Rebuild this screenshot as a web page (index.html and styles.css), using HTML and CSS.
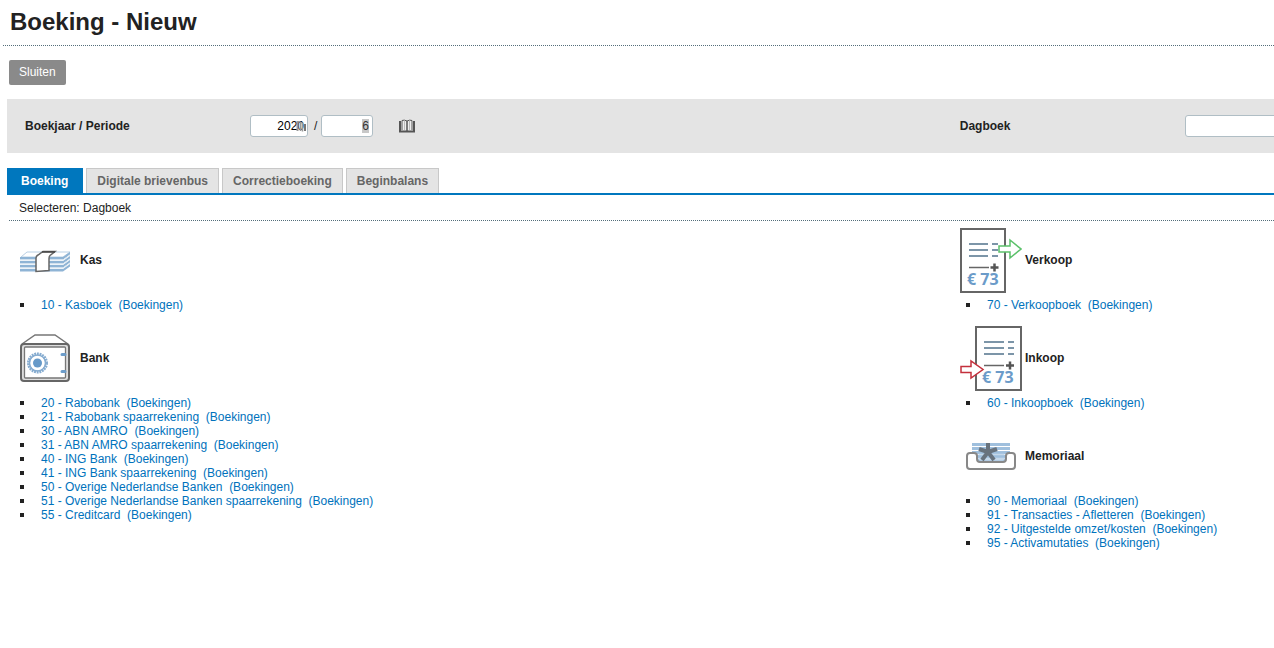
FILE: index.html
```html
<!DOCTYPE html>
<html lang="nl">
<head>
    <meta charset="UTF-8">
    <title>Boeking - Nieuw</title>
    <link rel="stylesheet" href="styles.css">
</head>
<body>
<h1 class="page-title">Boeking - Nieuw</h1>

<div class="toolbar">
    <button type="button" class="btn">Sluiten</button>
</div>

<form class="filter">
    <div class="filter-field">
        <label class="filter-label" for="year">Boekjaar / Periode</label>
        <span class="year-box">
            <input type="text" id="year" class="input input-year" value="2020">
            <svg class="year-icon" width="10" height="12" viewBox="0 0 10 12" fill="none" stroke="#999">
                <path d="M1.500 1v10" stroke-width="2" />
                <path d="M4.500 2v9M6.500 2.500v9" stroke-width="1.500" />
                <path d="M9 4v7" stroke="#777" stroke-width="2" />
                <path d="M1 1.500h3l3 2.500" />
            </svg>
        </span>
        <label class="slash" for="period">/</label>
        <input type="text" id="period" class="input input-period" value="6">
        <button type="button" class="book-btn" aria-label="Periode">
            <svg width="16" height="14" viewBox="0 0 16 14">
                <path d="M2 1.500Q4.500 0 8 2Q11.500 0 14 1.500V11H2z" fill="#eee" />
                <path d="M3 11V1.500Q5 .5 8 2Q11 .5 13 1.500V11" fill="none" stroke="#555" />
                <path d="M8 2v11" stroke="#555" stroke-width="1.500" />
                <path d="M5.500 1.500V11M10.500 1.500V11" stroke="#bbb" />
                <path d="M1 2v11M15 2v11" stroke="#555" stroke-width="2" />
                <path d="M0 12.500h16" stroke="#555" stroke-width="2" />
            </svg>
        </button>
    </div>
    <div class="filter-field">
        <label class="filter-label" for="journal">Dagboek</label>
        <input type="text" id="journal" class="input input-journal">
    </div>
</form>

<nav class="tabs">
    <a href="#" class="tab active">Boeking</a>
    <a href="#" class="tab">Digitale brievenbus</a>
    <a href="#" class="tab">Correctieboeking</a>
    <a href="#" class="tab">Beginbalans</a>
</nav>

<p class="subtitle">Selecteren: Dagboek</p>

<main class="columns">
    <div class="column">
        <section class="group">
            <h2 class="group-title">
                <svg class="group-icon" width="50" height="66" viewBox="0 0 50 66">
                    <path d="M7 25h43l-7 5H1z" fill="#fff" stroke="#b9d0e4" />
                    <path d="M0 30h43l7-5v2.500l-7 5H0zM0 34h43l7-5v2.500l-7 5H0zM0 38h43l7-5v2.500l-7 5H0zM0 42h43l7-5v2.500l-7 5H0z" fill="#8fb4d5" />
                    <path d="M0 33h43l7-5M0 37h43l7-5M0 41h43l7-5" fill="none" stroke="#dce8f2" />
                    <path d="M16 44.500V31q0-2 2-3l5-3.500h12l-5 4q-1 1-1 3v12z" fill="#fff" stroke="#666" stroke-width="1.500" />
                    <path d="M22 25h13" stroke="#444" stroke-width="1.500" />
                </svg>
                Kas
            </h2>
            <ul class="list">
                <li><a href="#">10 - Kasboek</a>&nbsp; <a href="#">(Boekingen)</a></li>
            </ul>
        </section>
        <section class="group">
            <h2 class="group-title">
                <svg class="group-icon" width="50" height="66" viewBox="0 0 50 66" fill="none">
                    <path d="M2 19L15 10h20l13 9" stroke="#777" stroke-width="1.500" />
                    <rect x="1" y="19" width="48" height="37" rx="3" fill="#ddd" stroke="#666" stroke-width="2" />
                    <rect x="4.500" y="22" width="41" height="31" rx="1" fill="#fff" stroke="#777" stroke-width="1.300" />
                    <circle cx="17.500" cy="38" r="9" stroke="#86acd0" stroke-width="3" stroke-dasharray="1.800 .8" />
                    <circle cx="17.500" cy="38" r="8" stroke="#86acd0" stroke-width="1.500" />
                    <circle cx="17.500" cy="38" r="4.500" fill="#6699c8" />
                    <path d="M42 29.500h3M42 46.500h3" stroke="#6d9dca" stroke-width="3" stroke-linecap="round" />
                </svg>
                Bank
            </h2>
            <ul class="list">
                <li><a href="#">20 - Rabobank</a>&nbsp; <a href="#">(Boekingen)</a></li>
                <li><a href="#">21 - Rabobank spaarrekening</a>&nbsp; <a href="#">(Boekingen)</a></li>
                <li><a href="#">30 - ABN AMRO</a>&nbsp; <a href="#">(Boekingen)</a></li>
                <li><a href="#">31 - ABN AMRO spaarrekening</a>&nbsp; <a href="#">(Boekingen)</a></li>
                <li><a href="#">40 - ING Bank</a>&nbsp; <a href="#">(Boekingen)</a></li>
                <li><a href="#">41 - ING Bank spaarrekening</a>&nbsp; <a href="#">(Boekingen)</a></li>
                <li><a href="#">50 - Overige Nederlandse Banken</a>&nbsp; <a href="#">(Boekingen)</a></li>
                <li><a href="#">51 - Overige Nederlandse Banken spaarrekening</a>&nbsp; <a href="#">(Boekingen)</a></li>
                <li><a href="#">55 - Creditcard</a>&nbsp; <a href="#">(Boekingen)</a></li>
            </ul>
        </section>
    </div>
    <div class="column column-right">
        <section class="group">
            <h2 class="group-title">
                <svg class="group-icon" width="62" height="66" viewBox="0 0 62 66">
                    <rect x="1" y="2" width="44" height="63" fill="#fff" stroke="#666" stroke-width="2" />
                    <path d="M9 17h19M9 23h19M9 29h19M32 17h6M32 23h6M32 29h6" stroke="#7c95a8" stroke-width="2" />
                    <path d="M9 40.500h20" stroke="#666" stroke-width="1.500" />
                    <path d="M30.500 40.500h8M34.500 36.500v8" stroke="#555" stroke-width="2.500" />
                    <text x="7" y="58" class="icon-text">€ 73</text>
                    <path d="M39 19h11v-6l11 9-11 9v-6H39z" fill="#fff" stroke="#5cc16b" stroke-width="1.500" />
                </svg>
                Verkoop
            </h2>
            <ul class="list">
                <li><a href="#">70 - Verkoopboek</a>&nbsp; <a href="#">(Boekingen)</a></li>
            </ul>
        </section>
        <section class="group">
            <h2 class="group-title">
                <svg class="group-icon" width="62" height="66" viewBox="0 0 62 66">
                    <rect x="16" y="2" width="45" height="63" fill="#fff" stroke="#666" stroke-width="2" />
                    <path d="M24 17h20M24 23h20M24 29h20M48 17h6M48 23h6M48 29h6" stroke="#7c95a8" stroke-width="2" />
                    <path d="M24 40.500h20" stroke="#666" stroke-width="1.500" />
                    <path d="M46 40.500h8M50 36.500v8" stroke="#555" stroke-width="2.500" />
                    <text x="22" y="58" class="icon-text">€ 73</text>
                    <path d="M1 41.500h10v-5.500l12 8.500-12 8.500v-5.500H1z" fill="#fff" stroke="#c4303c" stroke-width="1.500" />
                </svg>
                Inkoop
            </h2>
            <ul class="list">
                <li><a href="#">60 - Inkoopboek</a>&nbsp; <a href="#">(Boekingen)</a></li>
            </ul>
        </section>
        <section class="group">
            <h2 class="group-title">
                <svg class="group-icon" width="62" height="66" viewBox="0 0 62 66">
                    <path d="M12 21.500h38M12 25.500h38M12 29.500h38M14 33.500h34M16 37h30" stroke="#9fbfdd" stroke-width="3" />
                    <path d="M7 33q0-3 3-3h4q3 0 3 3v3q0 3 3 3h23q3 0 3-3v-3q0-3 3-3h3q3 0 3 3v10q0 3-3 3H10q-3 0-3-3z" fill="#fff" stroke="#888" stroke-width="2" />
                    <path d="M18.500 28.500h26v7q0 2-2 2h-22q-2 0-2-2z" fill="#c5d8ea" />
                    <path d="M18 29.500h27M18 33.500h27" stroke="#9fbfdd" stroke-width="2.500" />
                    <path d="M28 20v9M28 29l-9-3M28 29l9-3M28 29l-6 8M28 29l6 8" stroke="#68737e" stroke-width="4" />
                </svg>
                Memoriaal
            </h2>
            <ul class="list">
                <li><a href="#">90 - Memoriaal</a>&nbsp; <a href="#">(Boekingen)</a></li>
                <li><a href="#">91 - Transacties - Afletteren</a>&nbsp; <a href="#">(Boekingen)</a></li>
                <li><a href="#">92 - Uitgestelde omzet/kosten</a>&nbsp; <a href="#">(Boekingen)</a></li>
                <li><a href="#">95 - Activamutaties</a>&nbsp; <a href="#">(Boekingen)</a></li>
            </ul>
        </section>
    </div>
</main>

<script>
  // period is selected so it can be typed over directly
  var period = document.getElementById('period');
  period.focus();
  period.select();
</script>
</body>
</html>
```
FILE: styles.css
```css
* {
    box-sizing: border-box;
}
body {
    margin: 0;
    overflow-x: hidden;
    background: #fff;
    color: #222;
    font: 12px/14px "Liberation Sans", Arial, sans-serif;
}
h1, h2, p, ul {
    margin: 0;
    padding: 0;
}
a {
    color: #0072bc;
    text-decoration: none;
}
svg {
    display: block;
}
.page-title {
    margin-left: 3px;
    padding: 6px 7px 8px;
    border-bottom: 1px dotted #546e7a;
    font-size: 24px;
    line-height: 31px;
}
.toolbar {
    padding: 14px 9px;
}
.btn {
    display: block;
    height: 25px;
    padding: 0 10px 1px;
    border: 0;
    border-radius: 2px;
    background: #8a8a8a;
    color: #fff;
    font: 12px/24px "Liberation Sans", Arial, sans-serif;
}
/* filter bar */
.filter {
    display: grid;
    grid-template-columns: calc(75% - 2px) 1fr;
    margin-left: 7px;
    padding: 16px 0 16px 18px;
    background: #e4e4e4;
    overflow: hidden;
}
.filter-field {
    display: flex;
    align-items: center;
    min-width: 0;
}
.filter-label {
    flex: 0 0 225px;
    font-weight: bold;
}
.input {
    display: block;
    flex: none;
    height: 22px;
    padding: 0 3px;
    border: 1px solid #b0bec5;
    border-radius: 3px;
    background: #fff;
    color: #000;
    font: 12px "Liberation Sans", Arial, sans-serif;
    outline: none;
}
.input::selection {
    background: #c8c8c8;
    color: #333;
}
.input-year {
    width: 58px;
    text-align: right;
}
.input-period {
    width: 52px;
    text-align: right;
}
.input-journal {
    width: 200px;
}
.year-box {
    position: relative;
}
.year-icon {
    position: absolute;
    right: 2px;
    top: 5px;
}
.slash {
    width: 13px;
    padding-left: 6px;
}
.book-btn {
    margin-left: 26px;
    padding: 0;
    border: 0;
    background: none;
}
/* tabs */
.tabs {
    display: flex;
    gap: 3px;
    margin: 15px 0 0 7px;
    border-bottom: 2px solid #0077be;
}
.tab {
    height: 25px;
    padding: 0 10px;
    border: 1px solid #c8c8c8;
    border-bottom: 0;
    background: #e4e4e4;
    color: #666;
    font-weight: bold;
    line-height: 24px;
}
.tab.active {
    padding: 0 14px 0 13px;
    border-color: #0077be;
    background: #0077be;
    color: #fff;
}
.subtitle {
    margin-left: 9px;
    padding: 6px 10px 5px;
    border-bottom: 1px dotted #546e7a;
}
/* journals */
.columns {
    display: grid;
    grid-template-columns: calc(75% + 1px) 1fr;
    padding: 6px 2px 0 20px;
}
.group {
    margin-bottom: 13px;
}
.group-title {
    display: flex;
    align-items: center;
    gap: 10px;
    height: 66px;
    font-size: 12px;
    line-height: 14px;
}
.column-right .group-title {
    gap: 3px;
}
.group-icon {
    flex: none;
}
.icon-text {
    fill: #6b9bc9;
    font: bold 16px "Noto Sans", sans-serif;
}
.list {
    padding: 5px 0 0 21px;
    list-style: none;
}
.column-right .list {
    padding-left: 27px;
}
.list li {
    position: relative;
    white-space: nowrap;
}
.list li::before {
    content: "";
    position: absolute;
    left: -21px;
    top: 5px;
    width: 4px;
    height: 4px;
    background: #222;
}
```
